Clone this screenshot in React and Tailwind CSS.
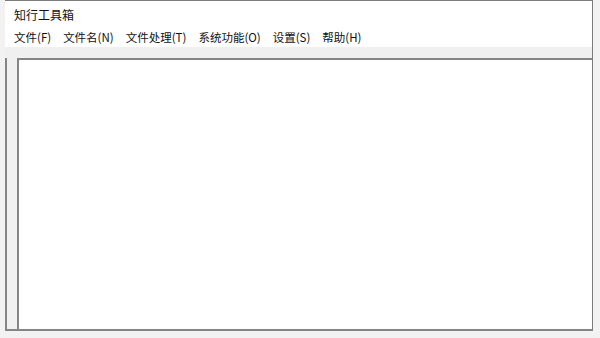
const MENU = ['文件(F)', '文件名(N)', '文件处理(T)', '系统功能(O)', '设置(S)', '帮助(H)']

export default function App() {
  return (
    <div
      className="w-[600px] h-[338px] overflow-hidden bg-[#f2f2f2] pl-[5px] pr-[7px] pb-[7px]"
      style={{ fontFamily: '"Noto Sans CJK SC", "Noto Sans", sans-serif' }}
    >
      <div className="h-full flex flex-col bg-white border-t border-r border-[#7d7d7d]">
        {/* Title */}
        <div className="h-[27px] flex items-center pl-[9px] text-[12px] text-[#111]">知行工具箱</div>

        {/* Menu */}
        <div className="h-[19px] flex items-center pl-[9px] gap-[12px] text-[11.5px] text-[#111]">
          {MENU.map(m => (
            <span key={m} className="leading-none">{m}</span>
          ))}
        </div>

        {/* Client */}
        <div className="flex-1 flex flex-col bg-[#f0f0f0] pt-[11px]">
          <div className="flex-1 flex">
            <div className="w-[12px] shrink-0 border-l-2 border-b-2 border-[#858585] bg-[#f0f0f0]" />
            <div className="flex-1 bg-white border-l-2 border-t-2 border-b-2 border-[#858585]" />
          </div>
        </div>
      </div>
    </div>
  )
}
